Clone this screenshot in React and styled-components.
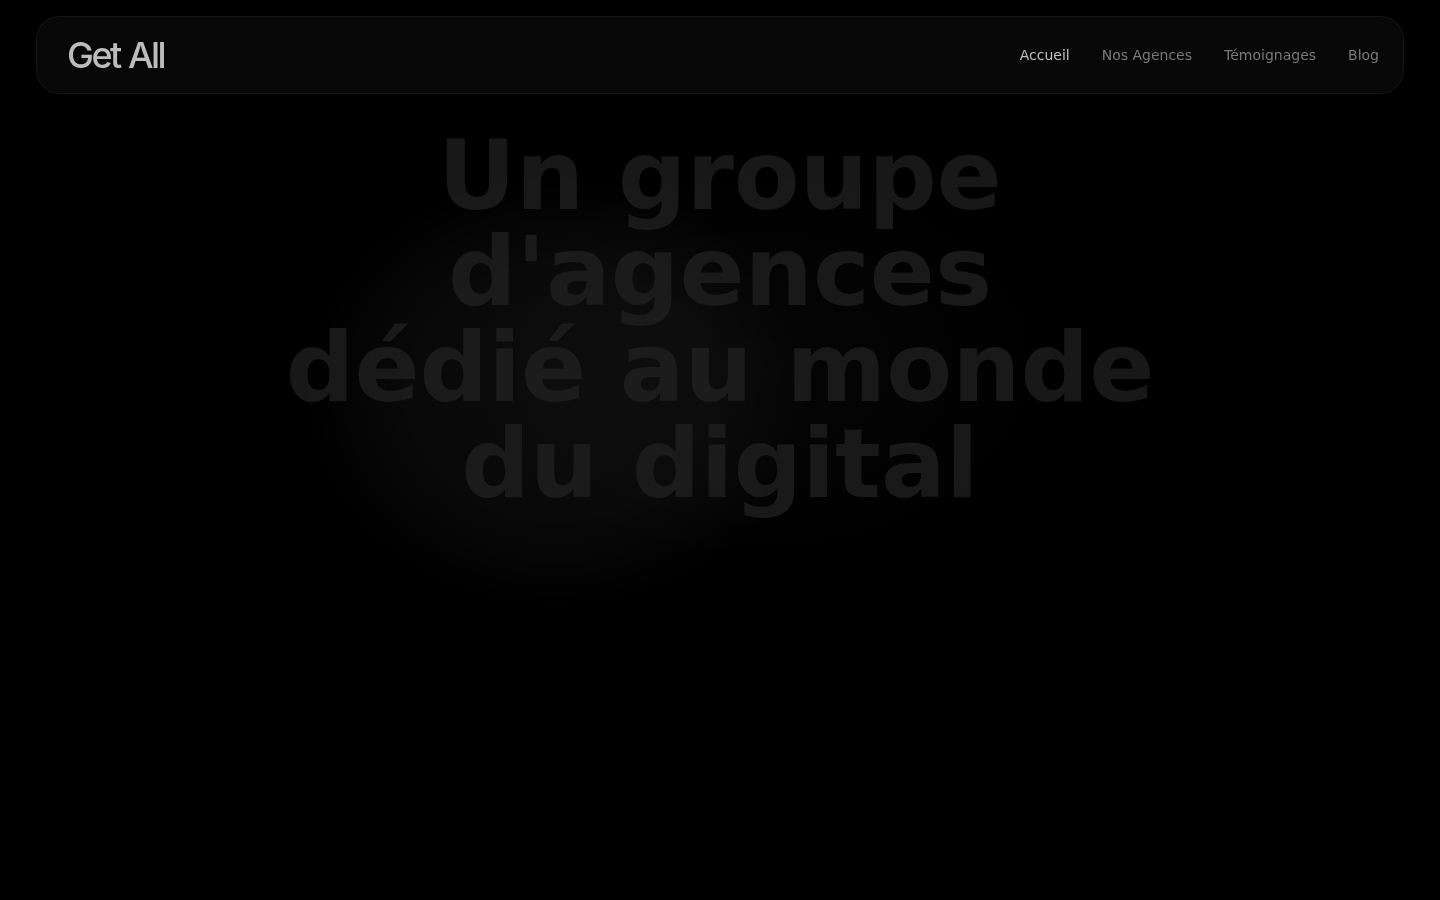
import styled, { createGlobalStyle } from 'styled-components'

const GlobalStyle = createGlobalStyle`
  html, body {
    margin: 0;
    background: #000;
    font-family: "DejaVu Sans", sans-serif;
  }
`

const links = ['Accueil', 'Nos Agences', 'Témoignages', 'Blog']

export default function App() {
  return (
    <Page>
      <GlobalStyle />
      <NavBar>
        <Logo>Get All</Logo>
        <NavLinks>
          {links.map((label, i) => (
            <NavLink key={label} href="#" $active={i === 0}>{label}</NavLink>
          ))}
        </NavLinks>
      </NavBar>
      <Hero>
        <Glow />
        <WideGlow />
        <Title>Un groupe d'agences dédié au monde du digital</Title>
      </Hero>
    </Page>
  )
}

const Page = styled.div`
  min-height: 900px;
  box-sizing: border-box;
  padding: 16px 36px 0;
  background: #000;
  overflow: hidden;
`

const NavBar = styled.nav`
  display: flex;
  align-items: center;
  justify-content: space-between;
  box-sizing: border-box;
  height: 78px;
  padding: 0 24px 0 30px;
  background: rgba(255, 255, 255, 0.028);
  border: 1px solid rgba(255, 255, 255, 0.06);
  border-radius: 24px;
  backdrop-filter: blur(12px);
`

const Logo = styled.div`
  font-family: Inter, sans-serif;
  font-size: 36px;
  font-weight: 500;
  letter-spacing: -2.5px;
  word-spacing: 1px;
  color: #bcbcbc;
`

const NavLinks = styled.div`
  display: flex;
  gap: 32px;
`

const NavLink = styled.a`
  font-size: 14px;
  text-decoration: none;
  color: ${p => (p.$active ? '#c0c0c0' : '#7a7a7a')};
`

const Hero = styled.section`
  position: relative;
  display: flex;
  justify-content: center;
  padding-top: 34px;
`

// soft blob behind the left half of the title
const Glow = styled.div`
  position: absolute;
  left: 265px;
  top: 78px;
  width: 510px;
  height: 440px;
  border-radius: 50%;
  background: radial-gradient(closest-side, rgba(255, 255, 255, 0.045) 0%, rgba(255, 255, 255, 0.034) 58%, rgba(255, 255, 255, 0.012) 86%, rgba(255, 255, 255, 0) 100%);
`

const WideGlow = styled.div`
  position: absolute;
  left: 420px;
  top: 70px;
  width: 600px;
  height: 400px;
  border-radius: 50%;
  background: radial-gradient(closest-side, rgba(255, 255, 255, 0.02) 0%, rgba(255, 255, 255, 0.012) 60%, rgba(255, 255, 255, 0) 100%);
`

const Title = styled.h1`
  position: relative;
  width: 870px;
  margin: 0;
  font-size: 96px;
  line-height: 96px;
  font-weight: 700;
  text-align: center;
  color: #212121;
  opacity: 0.75;
`
